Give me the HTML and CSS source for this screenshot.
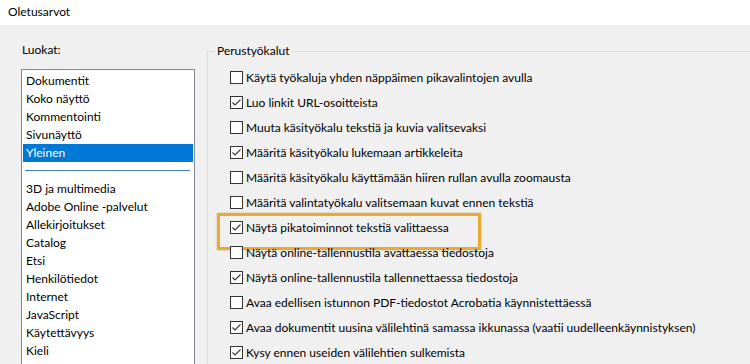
FILE: index.html
```html
<!DOCTYPE html>
<html lang="fi">
<head>
    <meta charset="UTF-8">
    <meta name="viewport" content="width=device-width, initial-scale=1.0">
    <title>Oletusarvot</title>
    <link rel="stylesheet" href="styles.css">
</head>
<body>
    <div class="titlebar">Oletusarvot</div>

    <div class="dialog">
        <!-- Category list -->
        <div class="categories">
            <div class="cat-label">Luokat:</div>
            <ul class="cat-list">
                <li>Dokumentit</li>
                <li>Koko näyttö</li>
                <li>Kommentointi</li>
                <li>Sivunäyttö</li>
                <li class="selected">Yleinen</li>
                <li class="separator"></li>
                <li>3D ja multimedia</li>
                <li>Adobe Online -palvelut</li>
                <li>Allekirjoitukset</li>
                <li>Catalog</li>
                <li>Etsi</li>
                <li>Henkilötiedot</li>
                <li>Internet</li>
                <li>JavaScript</li>
                <li>Käytettävyys</li>
                <li>Kieli</li>
                <li>Lomakkeet</li>
            </ul>
        </div>

        <!-- Basic tools group -->
        <fieldset class="group">
            <legend>Perustyökalut</legend>
            <div class="options">
                <label class="option"><span class="box"></span>Käytä työkaluja yhden näppäimen pikavalintojen avulla</label>
                <label class="option"><span class="box checked"></span>Luo linkit URL-osoitteista</label>
                <label class="option"><span class="box"></span>Muuta käsityökalu tekstiä ja kuvia valitsevaksi</label>
                <label class="option"><span class="box checked"></span>Määritä käsityökalu lukemaan artikkeleita</label>
                <label class="option"><span class="box"></span>Määritä käsityökalu käyttämään hiiren rullan avulla zoomausta</label>
                <label class="option"><span class="box"></span>Määritä valintatyökalu valitsemaan kuvat ennen tekstiä</label>
                <label class="option highlight"><span class="box checked"></span>Näytä pikatoiminnot tekstiä valittaessa</label>
                <label class="option"><span class="box"></span>Näytä online-tallennustila avattaessa tiedostoja</label>
                <label class="option"><span class="box checked"></span>Näytä online-tallennustila tallennettaessa tiedostoja</label>
                <label class="option"><span class="box"></span>Avaa edellisen istunnon PDF-tiedostot Acrobatia käynnistettäessä</label>
                <label class="option"><span class="box checked"></span>Avaa dokumentit uusina välilehtinä samassa ikkunassa (vaatii uudelleenkäynnistyksen)</label>
                <label class="option"><span class="box checked"></span>Kysy ennen useiden välilehtien sulkemista</label>
            </div>
        </fieldset>
    </div>

    <script>
        // Draw the tick mark into every checked box
        document.querySelectorAll(".box.checked").forEach(function (box) {
            box.innerHTML = '<svg width="11" height="11" viewBox="0 0 11 11"><polyline points="1.5,5.5 4,8 9.5,2.5" fill="none" stroke="#333" stroke-width="1.1"/></svg>';
        });
    </script>
</body>
</html>
```

FILE: styles.css
```css
/* Global styles */
* {
    margin: 0;
    padding: 0;
    box-sizing: border-box;
}

body {
    font-family: 'Lato', 'Liberation Sans', sans-serif;
    font-size: 12px;
    color: #000;
    background: #f0f0f0;
    height: 364px;
    overflow: hidden;
}

/* Title bar */
.titlebar {
    height: 25px;
    background: #fff;
    padding-left: 8px;
    line-height: 24px;
}

/* Dialog body */
.dialog {
    display: flex;
    align-items: flex-start;
    padding-top: 16px;
}

/* Categories */
.categories {
    margin-left: 21px;
    width: 174px;
}

.cat-label {
    height: 28px;
    padding-left: 1px;
    line-height: 18px;
}

.cat-list {
    list-style: none;
    background: #fff;
    border: 1px solid #828790;
    padding: 2px 1px 0;
    height: 320px;
    overflow: hidden;
}

.cat-list li {
    height: 18px;
    line-height: 18px;
    padding-left: 3px;
    white-space: nowrap;
}

.cat-list li.selected {
    background: #0078d7;
    color: #fff;
}

.cat-list li.separator {
    padding: 8px 3px 0 2px;
}

.cat-list li.separator::before {
    content: "";
    display: block;
    border-top: 1px solid #3d86c6;
}

/* Group box */
.group {
    flex: 1;
    margin-left: 12px;
    margin-top: 2px;
    border: 1px solid #dcdcdc;
    border-right: none;
    padding: 0;
    min-width: 0;
}

.group legend {
    margin-left: 7px;
    padding: 0 2px;
    line-height: 16px;
}

.options {
    padding: 6px 0 0 22px;
}

.option {
    display: flex;
    align-items: center;
    height: 25px;
    white-space: nowrap;
    position: relative;
}

.box {
    width: 13px;
    height: 13px;
    border: 1px solid #333;
    background: #fff;
    margin-right: 3px;
    flex-shrink: 0;
    display: flex;
    align-items: center;
    justify-content: center;
}

/* Orange call-out frame */
.option.highlight::after {
    content: "";
    position: absolute;
    left: -13px;
    top: -2px;
    width: 258px;
    height: 31px;
    border: 3px solid #e9aa32;
    box-shadow: 0 0 2px rgba(160, 110, 20, 0.4);
}
```
